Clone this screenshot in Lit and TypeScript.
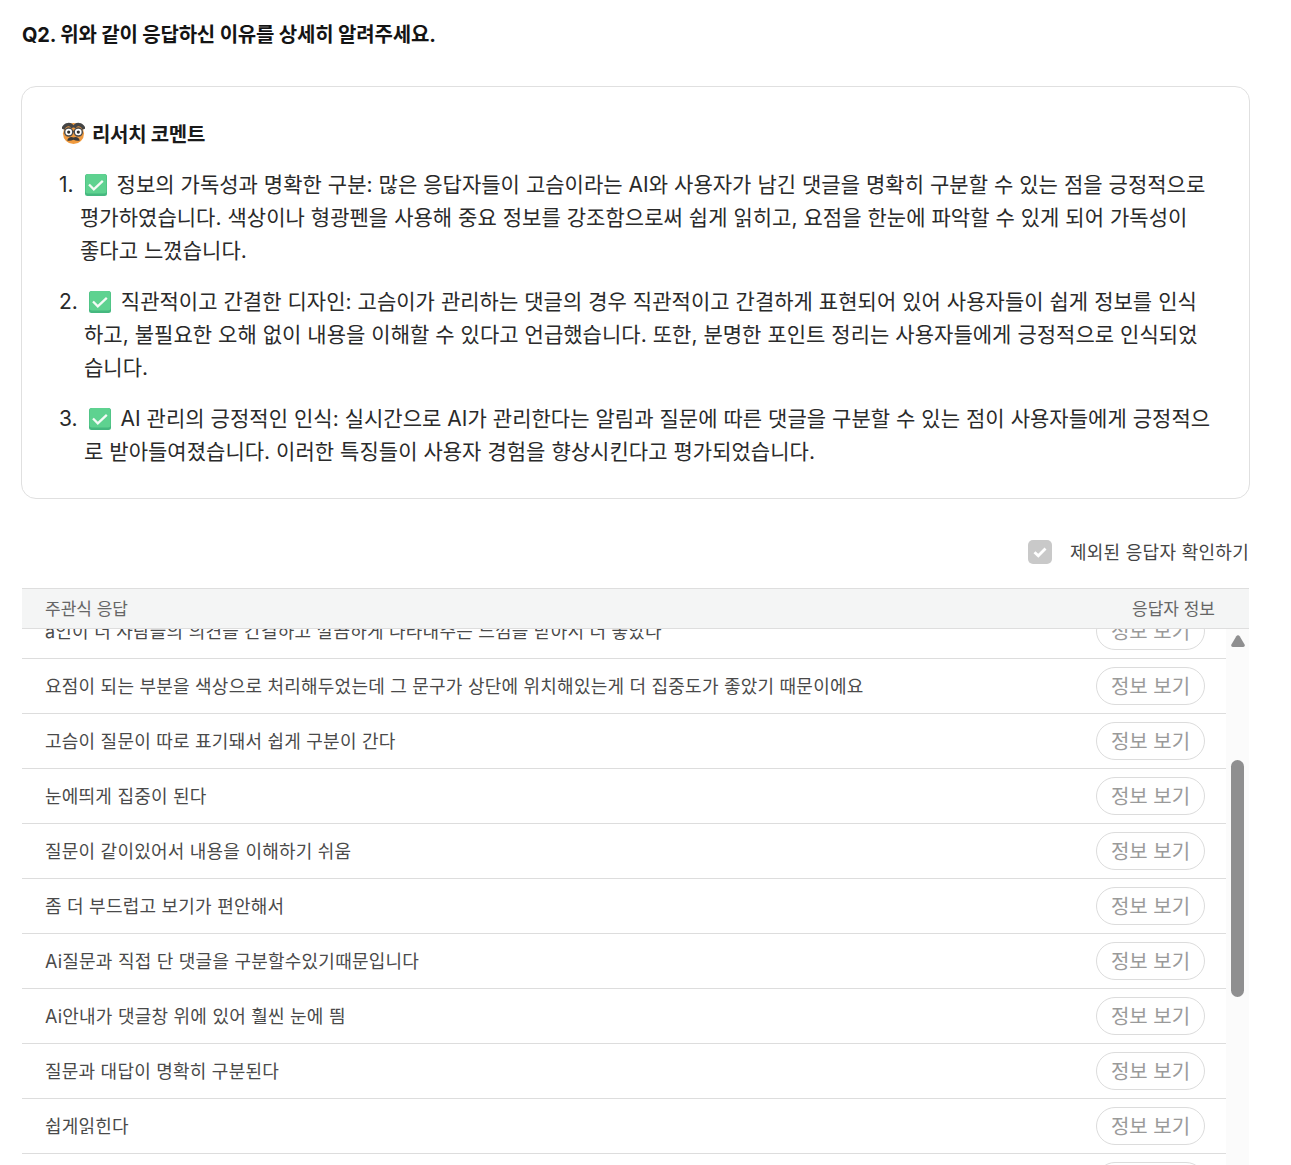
import { LitElement, html, css } from "lit";
import { customElement } from "lit/decorators.js";

const check = html`<svg class="chk" viewBox="0 0 22 22" aria-hidden="true"><rect x="0" y="0" width="22" height="22" rx="2.5" fill="#45b87f"/><rect x="0.5" y="0" width="21" height="19.5" rx="2.5" fill="#5ed290"/><path d="M4 10.500l4.800 4.800 9-8.500" fill="none" stroke="#f4fbf6" stroke-width="2.300"/></svg>`;

const items = [
  "정보의 가독성과 명확한 구분: 많은 응답자들이 고슴이라는 AI와 사용자가 남긴 댓글을 명확히 구분할 수 있는 점을 긍정적으로 평가하였습니다. 색상이나 형광펜을 사용해 중요 정보를 강조함으로써 쉽게 읽히고, 요점을 한눈에 파악할 수 있게 되어 가독성이 좋다고 느꼈습니다.",
  "직관적이고 간결한 디자인: 고슴이가 관리하는 댓글의 경우 직관적이고 간결하게 표현되어 있어 사용자들이 쉽게 정보를 인식하고, 불필요한 오해 없이 내용을 이해할 수 있다고 언급했습니다. 또한, 분명한 포인트 정리는 사용자들에게 긍정적으로 인식되었습니다.",
  "AI 관리의 긍정적인 인식: 실시간으로 AI가 관리한다는 알림과 질문에 따른 댓글을 구분할 수 있는 점이 사용자들에게 긍정적으로 받아들여졌습니다. 이러한 특징들이 사용자 경험을 향상시킨다고 평가되었습니다.",
];

const rows = [
  "a인이 더 사람들의 의견을 간결하고 깔끔하게 나타내주는 느낌을 받아서 더 좋았다",
  "요점이 되는 부분을 색상으로 처리해두었는데 그 문구가 상단에 위치해있는게 더 집중도가 좋았기 때문이에요",
  "고슴이 질문이 따로 표기돼서 쉽게 구분이 간다",
  "눈에띄게 집중이 된다",
  "질문이 같이있어서 내용을 이해하기 쉬움",
  "좀 더 부드럽고 보기가 편안해서",
  "Ai질문과 직접 단 댓글을 구분할수있기때문입니다",
  "Ai안내가 댓글창 위에 있어 훨씬 눈에 띔",
  "질문과 대답이 명확히 구분된다",
  "쉽게읽힌다",
  "",
];

@customElement("app-root")
export class AppRoot extends LitElement {
  static styles = css`
    :host {
      display: block;
      height: 1165px;
      overflow: hidden;
      background: #fff;
      font-family: Inter, "Noto Sans CJK KR", sans-serif;
      color: #222;
    }
    .page { width: 1227px; margin-left: 22px; padding-top: 22px; }
    h2 { margin: 0; font-size: 20px; line-height: 27px; font-weight: 700; color: #141414; letter-spacing: -0.18px; }
    .card {
      margin: 37px -1px 0;
      height: 413px;
      box-sizing: border-box;
      border: 1px solid #e0e0e0;
      border-radius: 15px;
      padding: 32px 36px 0 37px;
    }
    .title { display: flex; align-items: center; gap: 7px; margin-left: 3px; height: 28px; font-size: 20px; font-weight: 700; letter-spacing: -0.3px; color: #1a1a1a; }
    .mask { width: 23px; height: 24px; }
    ol { list-style: none; margin: 21px 0 0; padding: 0; font-size: 21px; line-height: 33px; letter-spacing: 0.03px; color: #2a2a2a; }
    li { margin-bottom: 18px; padding-left: 25px; text-indent: -25px; }
    li.first { padding-left: 21px; text-indent: -21px; padding-right: 6px; }
    .chk { width: 22px; height: 22px; vertical-align: -4px; margin: 0 4px 0 5px; }
    .filter { display: flex; justify-content: flex-end; align-items: center; gap: 18px; margin-top: 41px; height: 24px; font-size: 18px; letter-spacing: 0.28px; color: #444; }
    .filter span:last-child { padding-bottom: 2px; }
    .box { width: 24px; height: 24px; background: #c9c9c9; border-radius: 5px; display: flex; }
    .thead {
      display: flex; justify-content: space-between; align-items: center;
      box-sizing: border-box;
      margin-top: 24px; height: 41px;
      background: #f4f5f5;
      border-top: 1px solid #dedede; border-bottom: 1px solid #dedede;
      padding: 0 34px 2px 23px;
      font-size: 17px; letter-spacing: 0; color: #666;
    }
    .body { display: flex; height: 537px; overflow: hidden; }
    .list { width: 1204px; flex: none; overflow: hidden; }
    .inner { margin-top: -25px; }
    .row {
      display: flex; align-items: center; justify-content: space-between;
      box-sizing: border-box;
      height: 55px;
      border-bottom: 1px solid #dddddd;
      padding: 0 21px 0 23px;
      font-size: 18px; letter-spacing: 0.22px; color: #4a4a4a;
    }
    .row span { padding-bottom: 2px; }
    button {
      width: 109px; height: 38px; box-sizing: border-box; padding: 0 0 2px;
      border: 1px solid #dcdcdc; border-radius: 19px; background: #fff;
      font: inherit; font-size: 20px; letter-spacing: 0; color: #9a9a9a;
    }
    .bar { width: 23px; flex: none; background: #fbfbfb; display: flex; flex-direction: column; align-items: center; }
    .up { display: block; margin-top: 6px; width: 14px; height: 12px; }
    .thumb { margin-top: 113px; width: 13px; height: 237px; border-radius: 7px; background: #8f8f90; }
  `;

  render() {
    return html`<div class="page">
      <h2>Q2. 위와 같이 응답하신 이유를 상세히 알려주세요.</h2>
      <div class="card">
        <div class="title">
          <svg class="mask" viewBox="0 0 24 24" aria-hidden="true">
            <circle cx="12" cy="12.500" r="11" fill="#f09a3e"/>
            <path d="M1 8C3 1.800 9.500 2 11.300 6.500M23 8C21 1.800 14.500 2 12.700 6.500" fill="none" stroke="#454545" stroke-width="3.600"/>
            <circle cx="7" cy="11" r="4.200" fill="#fff" stroke="#4c4c4c" stroke-width="1.500"/>
            <circle cx="17" cy="11" r="4.200" fill="#fff" stroke="#4c4c4c" stroke-width="1.500"/>
            <circle cx="7" cy="11" r="1.700" fill="#2e2e2e"/><circle cx="17" cy="11" r="1.700" fill="#2e2e2e"/>
            <path d="M11 10.500h2" stroke="#4c4c4c" stroke-width="1.500"/>
            <path d="M5.500 20c.5-3.500 4-4.500 6.500-3.200 2.500-1.300 6-.3 6.500 3.200-2.500.5-4.500 0-6.500-1-2 1-4 1.500-6.500 1z" fill="#3a3a3a"/>
          </svg>
          <span>리서치 코멘트</span>
        </div>
        <ol>
          ${items.map((t, i) => html`<li class=${i ? "" : "first"}>${i + 1}. ${check} ${t}</li>`)}
        </ol>
      </div>
      <div class="filter">
        <span class="box"><svg viewBox="0 0 24 24" width="24" height="24" aria-hidden="true"><path d="M6.500 12.200l3.800 3.600 7.200-7.300" fill="none" stroke="#fff" stroke-width="2.800"/></svg></span>
        <span>제외된 응답자 확인하기</span>
      </div>
      <div class="thead"><span>주관식 응답</span><span>응답자 정보</span></div>
      <div class="body">
        <div class="list"><div class="inner">
          ${rows.map((r) => html`<div class="row"><span>${r}</span><button>정보 보기</button></div>`)}
        </div></div>
        <div class="bar">
          <svg class="up" viewBox="0 0 14 12" aria-hidden="true"><path d="M5.300 1.200a2 2 0 0 1 3.400 0L13.600 9.500a1.700 1.700 0 0 1-1.500 2.500H1.900a1.700 1.700 0 0 1-1.500-2.500z" fill="#8f8f90"/></svg>
          <div class="thumb"></div>
        </div>
      </div>
    </div>`;
  }
}
